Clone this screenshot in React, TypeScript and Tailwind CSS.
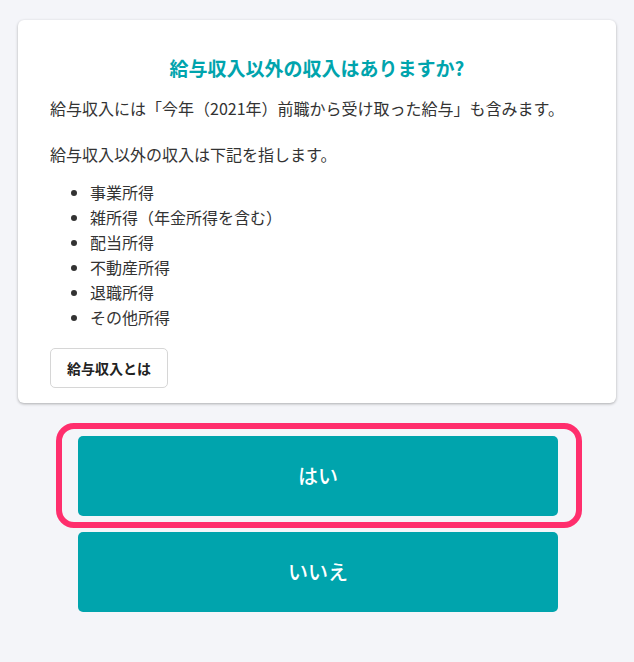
import React from "react";

const items = ["事業所得", "雑所得（年金所得を含む）", "配当所得", "不動産所得", "退職所得", "その他所得"];

export default function App() {
  return (
    <div
      className="min-h-[662px] w-full bg-[#f4f5f9] pt-5 pb-12"
      style={{ fontFamily: '"Noto Sans CJK JP", "Noto Sans", sans-serif' }}
    >
      <div className="mx-[18px] rounded-[6px] bg-white px-8 pt-[35px] pb-[15px] shadow-[0_1px_3px_rgba(0,0,0,0.3)]">
        <h1 className="text-center text-[19px] font-bold leading-[25px] text-[#00a4ad]">
          給与収入以外の収入はありますか?
        </h1>
        <p className="mt-[16px] text-[16px] leading-[24px] text-[#333333]">
          給与収入には「今年（2021年）前職から受け取った給与」も含みます。
        </p>
        <p className="mt-[22px] text-[16px] leading-[24px] text-[#333333]">
          給与収入以外の収入は下記を指します。
        </p>
        <ul className="mt-[14px] list-disc pl-10 text-[16px] leading-[25px] text-[#333333]">
          {items.map((t) => (
            <li key={t}>{t}</li>
          ))}
        </ul>
        <button className="mt-[18px] h-[40px] rounded-[5px] border border-[#d6d6d6] bg-white px-4 text-[14px] font-bold text-[#222]">
          給与収入とは
        </button>
      </div>

      <div className="ml-[78px] mt-[33px] flex w-[480px] flex-col gap-4">
        <div className="relative">
          <div className="pointer-events-none absolute -top-[13px] -bottom-[12px] -left-[22px] -right-[24px] rounded-[18px] border-[6px] border-[#ff2e6d]" />
          <button className="h-[80px] w-full rounded-[5px] bg-[#00a4ad] text-[20px] font-medium text-white">
            はい
          </button>
        </div>
        <button className="h-[80px] w-full rounded-[5px] bg-[#00a4ad] text-[20px] font-medium text-white">
          いいえ
        </button>
      </div>
    </div>
  );
}
